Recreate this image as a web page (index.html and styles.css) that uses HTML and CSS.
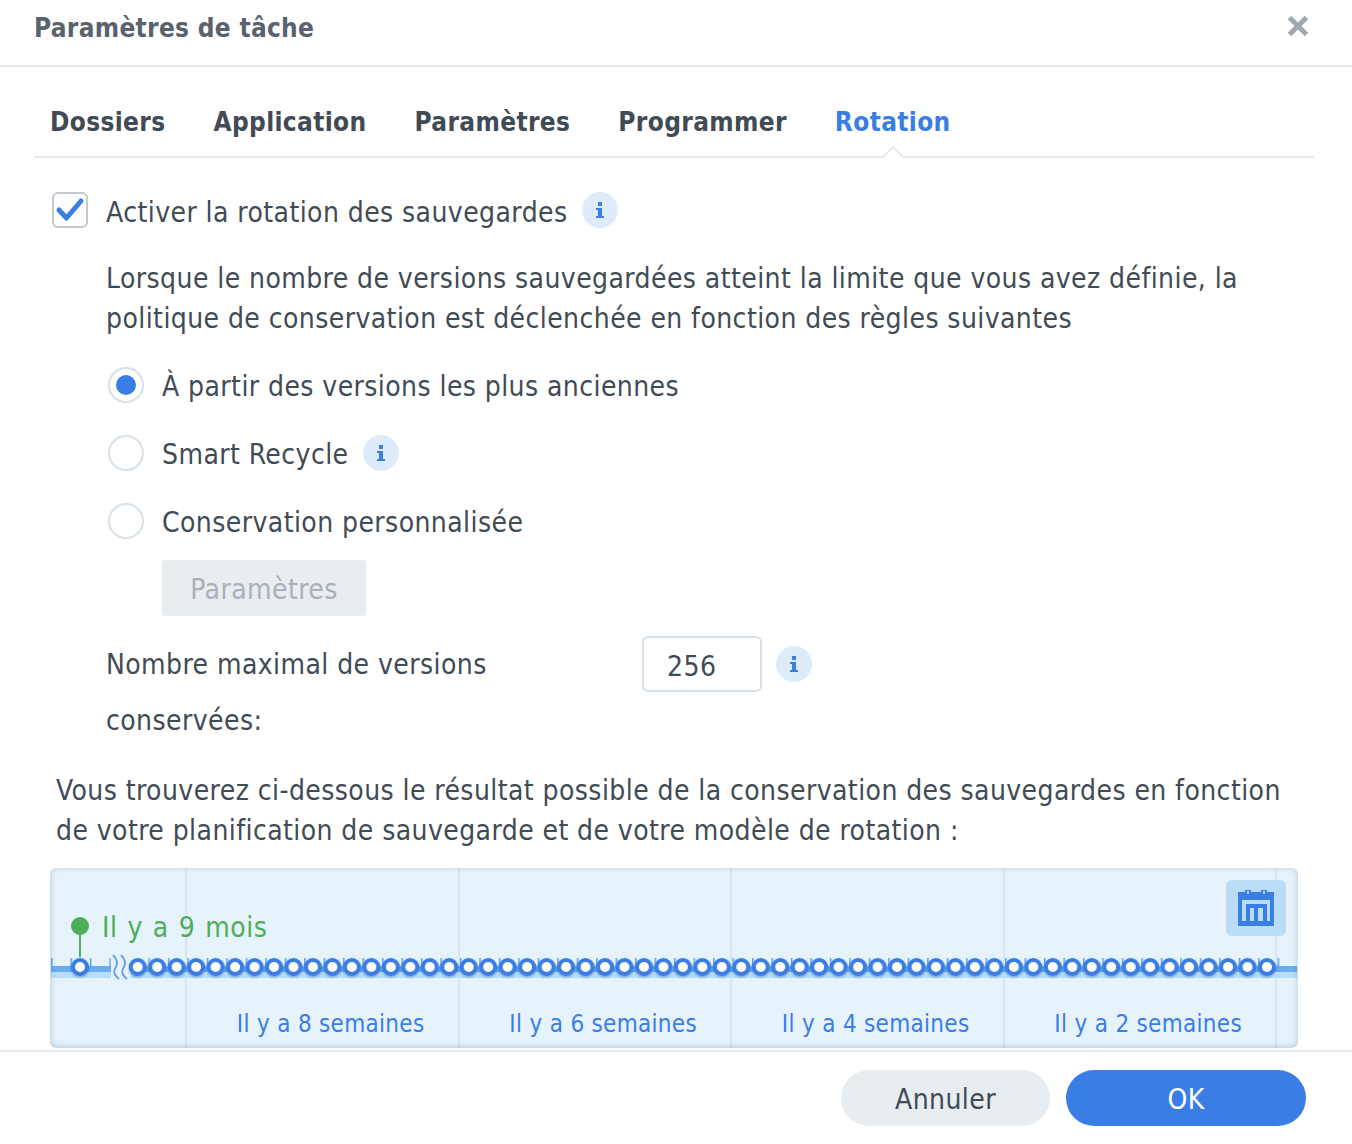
FILE: index.html
```html
<!DOCTYPE html>
<html lang="fr">
<head>
    <meta charset="UTF-8">
    <title>Paramètres de tâche</title>
    <link rel="stylesheet" href="styles.css">
</head>
<body>
    <div class="dialog">
        <header class="dialog-header">
            <h1>Paramètres de tâche</h1>
            <svg class="close-icon" width="24" height="24" viewBox="0 0 24 24"><path d="M3.500 3.500 20.500 20.500M20.500 3.500 3.500 20.500"/></svg>
        </header>

        <nav class="tabs">
            <a class="tab">Dossiers</a>
            <a class="tab">Application</a>
            <a class="tab">Paramètres</a>
            <a class="tab">Programmer</a>
            <a class="tab active">Rotation</a>
        </nav>

        <main class="content">
            <div class="check-row">
                <span class="checkbox">
                    <svg width="30" height="26" viewBox="0 0 30 26"><path d="M4 13 11.500 21 26 4"/></svg>
                </span>
                <span class="label check-label">Activer la rotation des sauvegardes</span>
                <span class="info"><svg width="8" height="16" viewBox="0 0 8 16"><path d="M2 0H6V4H2ZM0 6H6V14H8V16H0V14H2V8H0Z"/></svg></span>
            </div>

            <p class="desc">Lorsque le nombre de versions sauvegardées atteint la limite que vous avez définie, la politique de conservation est déclenchée en fonction des règles suivantes</p>

            <div class="radio-list">
                <div class="radio-row"><span class="radio checked"></span><span class="label">À partir des versions les plus anciennes</span></div>
                <div class="radio-row"><span class="radio"></span><span class="label">Smart Recycle</span><span class="info"><svg width="8" height="16" viewBox="0 0 8 16"><path d="M2 0H6V4H2ZM0 6H6V14H8V16H0V14H2V8H0Z"/></svg></span></div>
                <div class="radio-row"><span class="radio"></span><span class="label">Conservation personnalisée</span></div>
            </div>
            <button class="settings-btn">Paramètres</button>

            <div class="max-row">
                <label class="max-label">Nombre maximal de versions conservées:</label>
                <div class="max-input">256</div>
                <span class="info"><svg width="8" height="16" viewBox="0 0 8 16"><path d="M2 0H6V4H2ZM0 6H6V14H8V16H0V14H2V8H0Z"/></svg></span>
            </div>

            <p class="result">Vous trouverez ci-dessous le résultat possible de la conservation des sauvegardes en fonction de votre planification de sauvegarde et de votre modèle de rotation :</p>

            <div class="timeline">
                <div class="columns">
                    <div class="col"><span>Il y a 8 semaines</span></div>
                    <div class="col"><span>Il y a 6 semaines</span></div>
                    <div class="col"><span>Il y a 4 semaines</span></div>
                    <div class="col"><span>Il y a 2 semaines</span></div>
                    <div class="col last"></div>
                </div>
                <div class="oldest"><i class="pin"></i>Il y a 9 mois</div>
                <svg class="track" width="1246" height="34" viewBox="0 0 1246 34">
                    <defs>
                        <pattern id="ticks" x="0" y="0" width="19.470" height="9" patternUnits="userSpaceOnUse">
                            <rect width="1.500" height="9" fill="#5f9fea"/>
                        </pattern>
                        <pattern id="dots" x="77" y="0" width="19.470" height="34" patternUnits="userSpaceOnUse">
                            <circle cx="9.735" cy="18" r="7" fill="#fff" stroke="#3a7de4" stroke-width="4"/>
                        </pattern>
                        <filter id="dot-shadow" x="-5%" y="-50%" width="110%" height="200%">
                            <feDropShadow dx="0" dy="1.500" stdDeviation="1.200" flood-color="#1d4f8f" flood-opacity=".4"/>
                        </filter>
                    </defs>
                    <rect x="0" y="17" width="1246" height="6" fill="#6aaeef"/>
                    <rect x="0" y="23" width="1246" height="6" fill="#b9dcf8"/>
                    <rect x="0" y="9" width="1229" height="9" fill="url(#ticks)"/>
                    <rect x="60" y="9" width="20" height="25" fill="#e6f3fd"/>
                    <path class="wave" d="M62 6C66 10 67 14 65 18C63 21 61 24 68 30M70 6C74 10 75 14 73 18C71 21 69 24 76 30"/>
                    <g filter="url(#dot-shadow)">
                        <circle cx="29" cy="18" r="7" fill="#fff" stroke="#3a7de4" stroke-width="4"/>
                        <rect x="77" y="0" width="1150" height="34" fill="url(#dots)"/>
                    </g>
                </svg>
                <span class="calendar">
                    <svg width="36" height="36" viewBox="0 0 36 36"><path d="M0 2H7V0H13V2H23V0H29V2H36V36H0ZM4 10V31H32V10ZM9 1V4H11V1ZM25 1V4H27V1ZM8 14H29V31H25V18H20V31H16V18H12V31H8Z" fill-rule="evenodd"/></svg>
                </span>
            </div>
        </main>

        <footer class="dialog-footer">
            <button class="btn btn-cancel">Annuler</button>
            <button class="btn btn-ok">OK</button>
        </footer>
    </div>
</body>
</html>
```

FILE: styles.css
```css
:root {
    --text-color: #414b55;
    --blue: #3a7de4;
    --line: #e3e9ef;
}
html, body {
    margin: 0;
    padding: 0;
    background: #fff;
}
body {
    font-family: "DejaVu Sans Condensed", "DejaVu Sans", sans-serif;
    font-size: 28px;
    line-height: 40px;
    letter-spacing: .42px;
    color: var(--text-color);
}
.dialog {
    width: 1352px;
    height: 1144px;
    display: flex;
    flex-direction: column;
    overflow: hidden;
}
.dialog-header {
    height: 67px;
    flex: none;
    box-sizing: border-box;
    padding: 0 42px 14px 34px;
    border-bottom: 2px solid var(--line);
    display: flex;
    justify-content: space-between;
    align-items: center;
}
h1 {
    margin: 0;
    padding-top: 4px;
    font-size: 26px;
    font-weight: 700;
    letter-spacing: .3px;
    color: #5a636d;
}
.close-icon {
    fill: none;
    stroke: #a0a7ae;
    stroke-width: 5;
}
.tabs {
    margin: 0 38px 0 34px;
    height: 91px;
    box-sizing: border-box;
    padding: 35px 0 0 16px;
    display: flex;
    gap: 48px;
    border-bottom: 2px solid var(--line);
}
.tab {
    font-size: 26px;
    font-weight: 700;
    letter-spacing: .35px;
}
.tab.active {
    color: var(--blue);
    position: relative;
}
.tab.active::after {
    content: "";
    position: absolute;
    left: 50%;
    bottom: -9px;
    width: 16px;
    height: 16px;
    margin-left: -8px;
    box-sizing: border-box;
    background: #fff;
    border-left: 2px solid var(--line);
    border-top: 2px solid var(--line);
    transform: rotate(45deg);
}
.content {
    flex: 1;
    padding: 34px 54px 0 50px;
    min-height: 0;
}
.label {
    padding-top: 4px;
}
.check-label {
    padding-top: 6px;
}
.check-row {
    display: flex;
    align-items: center;
    height: 36px;
    margin-left: 2px;
}
.checkbox {
    width: 36px;
    height: 36px;
    box-sizing: border-box;
    border: 2px solid #c2c9d1;
    border-radius: 6px;
    margin-right: 18px;
    flex: none;
    position: relative;
}
.checkbox svg {
    position: absolute;
    left: 1px;
    top: 3px;
    fill: none;
    stroke: var(--blue);
    stroke-width: 5;
    stroke-linecap: round;
    stroke-linejoin: round;
}
.info {
    width: 36px;
    height: 36px;
    border-radius: 50%;
    background: #deebfb;
    margin-left: 14px;
    flex: none;
    display: flex;
    align-items: center;
    justify-content: center;
}
.info svg {
    fill: var(--blue);
}
.desc {
    margin: 31px 0 0 56px;
    width: 1150px;
}
.radio-list {
    margin: 28px 0 0 58px;
    display: flex;
    flex-direction: column;
    gap: 32px;
}
.radio-row {
    display: flex;
    align-items: center;
    height: 36px;
}
.radio {
    width: 36px;
    height: 36px;
    box-sizing: border-box;
    border: 2px solid #d6e1ea;
    border-radius: 50%;
    margin-right: 18px;
    flex: none;
    display: flex;
    align-items: center;
    justify-content: center;
}
.radio.checked::after {
    content: "";
    width: 20px;
    height: 20px;
    border-radius: 50%;
    background: var(--blue);
}
.settings-btn {
    display: block;
    margin: 21px 0 0 112px;
    width: 204px;
    height: 56px;
    padding: 4px 0 0;
    border: 0;
    border-radius: 4px;
    background: #e8edf1;
    color: #aab1b7;
    font: inherit;
    letter-spacing: inherit;
}
.max-row {
    display: flex;
    margin: 20px 0 0 56px;
    align-items: flex-start;
}
.max-label {
    width: 536px;
    box-sizing: border-box;
    padding: 1px 100px 0 0;
    line-height: 56px;
    flex: none;
}
.max-input {
    width: 120px;
    height: 56px;
    box-sizing: border-box;
    border: 2px solid #d6e1ea;
    border-radius: 6px;
    padding: 9px 0 0 23px;
}
.max-row .info {
    margin: 10px 0 0 14px;
}
.result {
    margin: 22px 0 0 6px;
    width: 1240px;
}
.timeline {
    margin-top: 17px;
    width: 1248px;
    height: 180px;
    background: #e6f3fd;
    border-radius: 6px;
    position: relative;
    overflow: hidden;
}
.timeline::after {
    content: "";
    position: absolute;
    inset: 0;
    border-radius: 6px;
    box-shadow: inset 0 -1px 6px rgba(60, 90, 130, .3);
}
.columns {
    display: flex;
    height: 100%;
    padding-left: 135px;
    box-sizing: border-box;
}
.col {
    width: 272.500px;
    flex: none;
    box-sizing: border-box;
    border-left: 2px solid #d5e7f7;
    color: var(--blue);
    font-size: 24px;
    line-height: 36px;
    letter-spacing: .3px;
    text-align: right;
    padding: 138px 33px 0 0;
}
.col.last {
    width: 20px;
    padding: 0;
}
.oldest {
    position: absolute;
    left: 52px;
    top: 40px;
    color: #4caf57;
    font-size: 28px;
    letter-spacing: .5px;
    word-spacing: 1.500px;
}
.pin {
    position: absolute;
    left: -31px;
    top: 9px;
    width: 18px;
    height: 18px;
    border-radius: 50%;
    background: #4caf57;
}
.pin::after {
    content: "";
    position: absolute;
    left: 8px;
    top: 16px;
    width: 2px;
    height: 24px;
    background: #4caf57;
}
.track {
    position: absolute;
    left: 1px;
    top: 81px;
}
.wave {
    fill: none;
    stroke: #5f9fea;
    stroke-width: 1.800;
}
.calendar {
    position: absolute;
    right: 12px;
    top: 12px;
    width: 60px;
    height: 56px;
    border-radius: 6px;
    background: #b9dcf7;
    display: flex;
    align-items: center;
    justify-content: center;
}
.calendar svg {
    fill: var(--blue);
}
.dialog-footer {
    flex: none;
    height: 94px;
    box-sizing: border-box;
    border-top: 2px solid var(--line);
    background: #fff;
    padding: 18px 46px 0 0;
    display: flex;
    justify-content: flex-end;
    gap: 16px;
}
.btn {
    height: 56px;
    padding: 4px 0 0;
    border: 0;
    border-radius: 28px;
    font: inherit;
    letter-spacing: inherit;
}
.btn-cancel {
    width: 209px;
    background: #e8edf1;
    color: var(--text-color);
}
.btn-ok {
    width: 240px;
    background: var(--blue);
    color: #fff;
}
```
